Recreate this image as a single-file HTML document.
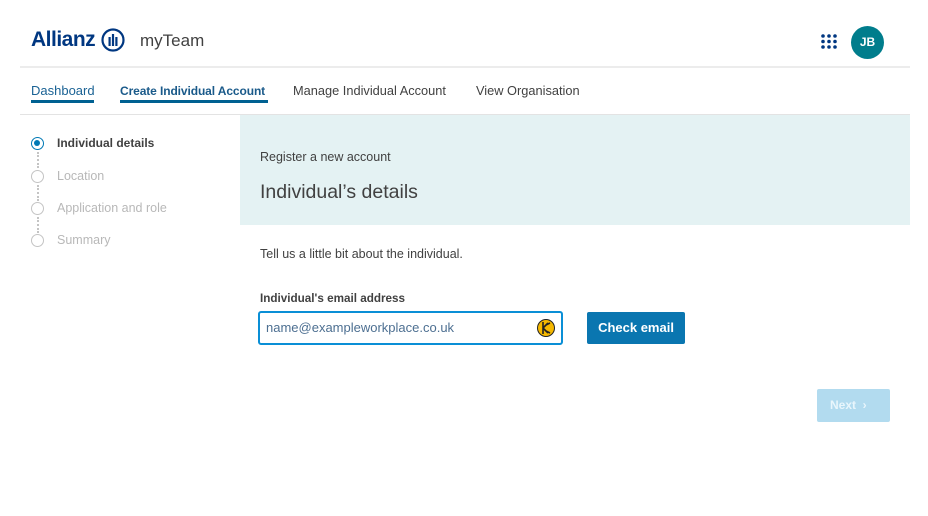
<!DOCTYPE html>
<html><head><meta charset="utf-8"><style>
*{margin:0;padding:0;box-sizing:border-box}
body{width:928px;height:516px;background:#fff;font-family:"Liberation Sans",sans-serif;position:relative;overflow:hidden;color:#414141}
.a{position:absolute}
.logo{left:31px;top:28px;font-size:21px;font-weight:bold;color:#003781;letter-spacing:-0.5px}
.nav{top:83px;font-size:13px}
.step{left:57px;font-size:12.5px;color:#b8b8b8}
.circ{left:31px;width:13px;height:13px;border:1.5px solid #c4c4c4;border-radius:50%}
.dots{left:36.5px;width:2px;border-left:2px dotted #c4c4c4}
</style></head><body>
<div class="a logo">Allianz</div>
<svg class="a" style="left:101px;top:28px" width="24" height="24" viewBox="0 0 24 24"><circle cx="12" cy="12" r="10.5" fill="none" stroke="#003781" stroke-width="2.2"/><rect x="7.5" y="9" width="2.2" height="9" fill="#003781"/><rect x="10.9" y="6" width="2.2" height="12" fill="#003781"/><rect x="14.3" y="9" width="2.2" height="9" fill="#003781"/></svg>
<div class="a" style="left:140px;top:31px;font-size:17px;color:#414141">myTeam</div>
<svg class="a" style="left:820px;top:33px" width="18" height="17"><g fill="#003781"><circle cx="3" cy="3" r="1.8"/><circle cx="9" cy="3" r="1.8"/><circle cx="15" cy="3" r="1.8"/><circle cx="3" cy="8.5" r="1.8"/><circle cx="9" cy="8.5" r="1.8"/><circle cx="15" cy="8.5" r="1.8"/><circle cx="3" cy="14" r="1.8"/><circle cx="9" cy="14" r="1.8"/><circle cx="15" cy="14" r="1.8"/></g></svg>
<div class="a" style="left:851px;top:26px;width:33px;height:33px;border-radius:50%;background:#007d8c;color:#fff;font-size:12px;font-weight:bold;text-align:center;line-height:33px">JB</div>
<div class="a" style="left:20px;top:66px;width:890px;height:2px;background:#ececec"></div>
<div class="a nav" style="left:31px;color:#1a6294">Dashboard</div>
<div class="a" style="left:31px;top:100px;width:63px;height:3px;background:#006192"></div>
<div class="a nav" style="left:120px;color:#1a5a8a;font-weight:bold;font-size:12px;letter-spacing:-0.1px;top:84px">Create Individual Account</div>
<div class="a" style="left:120px;top:100px;width:148px;height:3px;background:#006192"></div>
<div class="a nav" style="left:293px;font-size:12.8px">Manage Individual Account</div>
<div class="a nav" style="left:476px;font-size:12.8px">View Organisation</div>
<div class="a" style="left:20px;top:114px;width:890px;height:1px;background:#e3e3e3"></div>
<div class="a" style="left:31px;top:137px;width:13px;height:13px;border:1.5px solid #0079b5;border-radius:50%"><div style="margin:2px;width:6px;height:6px;border-radius:50%;background:#0079b5"></div></div>
<div class="a step" style="top:136px;color:#414141;font-weight:bold;font-size:12px">Individual details</div>
<div class="a dots" style="top:152px;height:16px"></div>
<div class="a circ" style="top:170px"></div>
<div class="a step" style="top:169px">Location</div>
<div class="a dots" style="top:185px;height:16px"></div>
<div class="a circ" style="top:202px"></div>
<div class="a step" style="top:201px">Application and role</div>
<div class="a dots" style="top:217px;height:16px"></div>
<div class="a circ" style="top:234px"></div>
<div class="a step" style="top:233px">Summary</div>
<div class="a" style="left:240px;top:115px;width:670px;height:110px;background:#e4f2f3"></div>
<div class="a" style="left:260px;top:150px;font-size:12.5px">Register a new account</div>
<div class="a" style="left:260px;top:181px;font-size:19.5px">Individual’s details</div>
<div class="a" style="left:260px;top:247px;font-size:12.5px">Tell us a little bit about the individual.</div>
<div class="a" style="left:260px;top:292px;font-size:11.7px;font-weight:bold">Individual's email address</div>
<div class="a" style="left:258px;top:311px;width:305px;height:34px;border:2px solid #0a8fd6;border-radius:3px"></div>
<div class="a" style="left:266px;top:320px;font-size:13px;color:#4d6f91">name@exampleworkplace.co.uk</div>
<svg class="a" style="left:537px;top:319px" width="18" height="18" viewBox="0 0 18 18"><circle cx="9" cy="9" r="8.5" fill="#f5b800" stroke="#222" stroke-width="1"/><path d="M6 3v12M6 9l5-5M6 9l5 5M9 6l4-2M9 12l4 2" stroke="#222" stroke-width="1.6" fill="none"/></svg>
<div class="a" style="left:587px;top:312px;width:98px;height:32px;background:#0a76b0;border-radius:2px;color:#fff;font-size:13px;font-weight:bold;text-align:center;line-height:32px">Check email</div>
<div class="a" style="left:817px;top:389px;width:73px;height:33px;background:#b2dbef;border-radius:2px;color:#e9f6fc;font-size:12px;font-weight:bold;line-height:33px;padding-left:13px">Next &nbsp;›</div>
</body></html>
